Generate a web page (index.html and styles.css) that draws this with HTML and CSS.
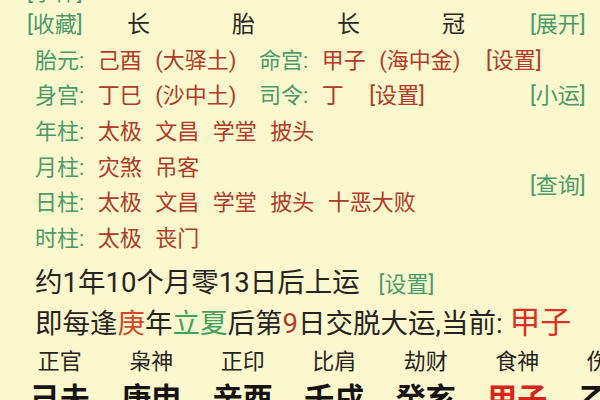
FILE: index.html
```html
<!DOCTYPE html>
<html lang="zh-CN">
<head>
<meta charset="utf-8">
<title>八字排盘</title>
<link rel="stylesheet" href="styles.css">
</head>
<body>
<div class="page">
  <section class="top">
    <div class="main">
      <div class="row head first-row"><span class="g">[字体]</span></div>
      <div class="row head">
        <span class="g tag">[收藏]</span>
        <span class="pos">长</span><span class="pos">胎</span><span class="pos">长</span><span class="pos">冠</span>
      </div>
      <div class="row"><span class="g">胎元:</span> <span class="r">己酉 (大驿土)</span> <span class="g gap">命宫:</span> <span class="r">甲子 (海中金)</span> <span class="r set">[设置]</span></div>
      <div class="row"><span class="g">身宫:</span> <span class="r">丁巳 (沙中土)</span> <span class="g gap">司令:</span> <span class="r">丁</span> <span class="r set">[设置]</span></div>
      <div class="row"><span class="g">年柱:</span> <span class="r">太极 文昌 学堂 披头</span></div>
      <div class="row"><span class="g">月柱:</span> <span class="r">灾煞 吊客</span></div>
      <div class="row"><span class="g">日柱:</span> <span class="r">太极 文昌 学堂 披头 十恶大败</span></div>
      <div class="row"><span class="g">时柱:</span> <span class="r">太极 丧门</span></div>
    </div>
    <div class="side">
      <span class="g s1">[展开]</span>
      <span class="g s2">[小运]</span>
      <span class="g s3">[查询]</span>
    </div>
  </section>
  <div class="line first">约1年10个月零13日后上运 <span class="g small">[设置]</span></div>
  <div class="line">即每逢<span class="hot">庚</span>年<span class="lg">立夏</span>后第<span class="r">9</span>日交脱大运,当前: <span class="cur">甲子</span></div>
  <div class="cols gods">
    <span>正官</span><span>枭神</span><span>正印</span><span>比肩</span><span>劫财</span><span>食神</span><span>伤官</span><span>偏财</span>
  </div>
  <div class="cols pillars">
    <span>己未</span><span>庚申</span><span>辛酉</span><span>壬戌</span><span>癸亥</span><span class="now">甲子</span><span>乙丑</span><span>丙寅</span>
  </div>
</div>
</body>
</html>
```

FILE: styles.css
```css
html, body {
  margin: 0;
  padding: 0;
  width: 600px;
  height: 400px;
  overflow: hidden;
  background: #fbf8cd;
}

.page {
  font-family: Roboto, "Noto Sans CJK SC", sans-serif;
  color: #262420;
  white-space: nowrap;
}

.top {
  display: flex;
  margin-top: -22px;
}

.main {
  flex: 0 0 530px;
  min-width: 0;
  display: flex;
  flex-direction: column;
}

.row {
  height: 35.7px;
  line-height: 35.7px;
  font-size: 22px;
  padding-left: 35px;
  word-spacing: 8px;
}

.row.head {
  padding-left: 27px;
  display: flex;
  word-spacing: 0;
}

.row.first-row {
  height: 29px;
  line-height: 29px;
}

.tag {
  width: 100px;
  flex: none;
}

.pos {
  width: 105px;
  flex: none;
  font-size: 23px;
  color: #2a2723;
}

.g {
  color: #4b9a69;
}

.r {
  color: #b2392b;
}

.gap {
  margin-left: 9px;
}

.set {
  margin-left: 12px;
}

.side {
  flex: 0 0 70px;
  display: grid;
  grid-template-rows: 29px repeat(7, 35.7px);
  font-size: 22px;
  line-height: 35.7px;
}

.s1 { grid-row: 2; }
.s2 { grid-row: 4; }
.s3 { grid-row: 6 / span 2; align-self: center; }

.line {
  padding-left: 35px;
  font-size: 27.5px;
  line-height: 40px;
  height: 40px;
}

.line.first {
  margin-top: 6px;
}

.small {
  font-size: 22px;
  margin-left: 12px;
}

.hot {
  color: #d5462c;
}

.lg {
  color: #3fa35f;
}

.cur {
  color: #dd2f25;
  font-size: 31px;
}

.cols {
  display: grid;
  grid-template-columns: repeat(8, 91.5px);
  padding-left: 14px;
  text-align: center;
}

.gods {
  font-size: 22px;
  line-height: 38px;
  height: 38px;
}

.pillars {
  font-size: 30px;
  font-weight: 700;
  line-height: 36px;
  color: #151412;
}

.pillars .now {
  color: #d8241c;
}
```
